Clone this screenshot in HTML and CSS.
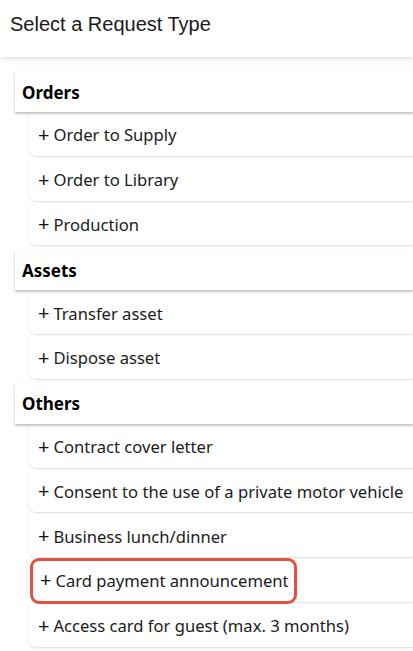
FILE: index.html
```html
<!DOCTYPE html>
<html>
<head>
<meta charset="utf-8">
<link rel="stylesheet" href="styles.css">
</head>
<body>
<div class="topbar">Select a Request Type</div>
<div class="list">
  <div class="group">Orders</div>
  <div class="item"><span class="plus">+</span>Order to Supply</div>
  <div class="item"><span class="plus">+</span>Order to Library</div>
  <div class="item"><span class="plus">+</span>Production</div>
  <div class="group">Assets</div>
  <div class="item"><span class="plus">+</span>Transfer asset</div>
  <div class="item"><span class="plus">+</span>Dispose asset</div>
  <div class="group">Others</div>
  <div class="item"><span class="plus">+</span>Contract cover letter</div>
  <div class="item"><span class="plus">+</span>Consent to the use of a private motor vehicle</div>
  <div class="item"><span class="plus">+</span>Business lunch/dinner</div>
  <div class="item"><span class="hl"><span class="plus">+</span>Card payment announcement</span></div>
  <div class="item"><span class="plus">+</span>Access card for guest (max. 3 months)</div>
</div>
</body>
</html>
```
FILE: styles.css
```css
html, body {
  margin: 0;
  padding: 0;
  background: #fff;
  overflow: hidden;
}
body {
  width: 413px;
  height: 651px;
  font-family: "Noto Sans", "Open Sans", sans-serif;
  color: #111;
}
.topbar {
  height: 57px;
  box-sizing: border-box;
  padding: 13px 0 0 10px;
  font-family: "Liberation Sans", Arial, sans-serif;
  font-size: 20px;
  color: #1a1a1a;
  box-shadow: 0 2px 5px rgba(0, 0, 0, 0.12);
  position: relative;
  z-index: 2;
}
.list {
  padding: 11px 0 0 15px;
}
.group {
  height: 41px;
  margin-top: 3px;
  box-sizing: border-box;
  padding-left: 7px;
  padding-top: 1px;
  display: flex;
  align-items: center;
  font-weight: 700;
  font-size: 17px;
  color: #000;
  box-shadow: 0 2px 2px rgba(0, 0, 0, 0.22), 0 0 3px rgba(0, 0, 0, 0.06);
  position: relative;
}
.item {
  height: 44.75px;
  box-sizing: border-box;
  margin-left: 13px;
  padding-left: 10px;
  padding-top: 2px;
  display: flex;
  align-items: center;
  font-size: 16.6px;
  color: #1b1b1b;
  border-bottom: 1px solid #e4e4e4;
  border-bottom-left-radius: 9px;
  box-shadow: -1px 1px 1px rgba(0, 0, 0, 0.04);
  white-space: nowrap;
}
.plus {
  font-size: 20px;
  line-height: 1;
  margin-right: 4px;
  color: #111;
}
.hl {
  display: flex;
  align-items: center;
  margin-left: -8px;
  padding: 8px 5px 9px 7px;
  border: 3px solid #e05242;
  border-radius: 9px;
}
```
